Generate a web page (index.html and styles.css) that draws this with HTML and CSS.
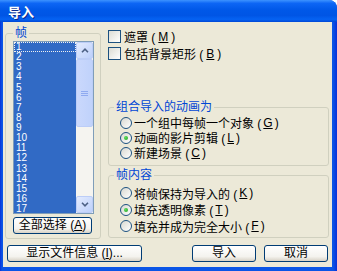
FILE: index.html
```html
<!DOCTYPE html>
<html>
<head>
    <title>导入</title>
    <link rel="stylesheet" href="styles.css">
</head>
<body>
    <div class="window">
        <div class="titlebar"><span class="title">导入</span></div>
        <div class="client">
            <div class="top">
                <!-- frame list -->
                <fieldset class="group frames">
                    <legend>帧</legend>
                    <div class="listbox">
                        <ul class="items">
                            <li class="focus">1</li>
                            <li>2</li>
                            <li>3</li>
                            <li>4</li>
                            <li>5</li>
                            <li>6</li>
                            <li>7</li>
                            <li>8</li>
                            <li>9</li>
                            <li>10</li>
                            <li>11</li>
                            <li>12</li>
                            <li>13</li>
                            <li>14</li>
                            <li>15</li>
                            <li>16</li>
                            <li>17</li>
                        </ul>
                        <div class="scrollbar">
                            <div class="sb-btn">
                                <svg width="8" height="5" viewBox="0 0 8 5"><path d="M1 4.2 L4 1.2 L7 4.2" fill="none" stroke="#4d6185" stroke-width="1.6"/></svg>
                            </div>
                            <div class="sb-thumb">
                                <svg width="7" height="7" viewBox="0 0 7 7"><path d="M0 1.5H7M0 3.5H7M0 5.5H7" stroke="#8faaf0" stroke-width="1"/></svg>
                            </div>
                            <div class="sb-track"></div>
                            <div class="sb-btn">
                                <svg width="8" height="5" viewBox="0 0 8 5"><path d="M1 0.8 L4 3.8 L7 0.8" fill="none" stroke="#4d6185" stroke-width="1.6"/></svg>
                            </div>
                        </div>
                    </div>
                    <button class="btn select-all">全部选择 (<u>A</u>)</button>
                </fieldset>

                <!-- options -->
                <div class="options">
                    <label class="check"><span class="box"></span>遮罩 (<u>M</u>)</label>
                    <label class="check"><span class="box"></span>包括背景矩形 (<u>B</u>)</label>

                    <fieldset class="group anim">
                        <legend>组合导入的动画为</legend>
                        <label class="radio"><span class="dot"></span>一个组中每帧一个对象 (<u>G</u>)</label>
                        <label class="radio"><span class="dot on"></span>动画的影片剪辑 (<u>L</u>)</label>
                        <label class="radio"><span class="dot"></span>新建场景 (<u>C</u>)</label>
                    </fieldset>

                    <fieldset class="group content">
                        <legend>帧内容</legend>
                        <label class="radio"><span class="dot"></span>将帧保持为导入的 (<u>K</u>)</label>
                        <label class="radio"><span class="dot on"></span>填充透明像素 (<u>T</u>)</label>
                        <label class="radio"><span class="dot"></span>填充并成为完全大小 (<u>F</u>)</label>
                    </fieldset>
                </div>
            </div>

            <div class="bottom">
                <button class="btn info">显示文件信息 (<u>I</u>)...</button>
                <button class="btn ok">导入</button>
                <button class="btn cancel">取消</button>
            </div>
        </div>
    </div>
</body>
</html>
```

FILE: styles.css
```css
* {
    box-sizing: border-box;
}

html, body {
    margin: 0;
    padding: 0;
    background-color: #fff;
}

body {
    font-family: "Liberation Sans", "Noto Sans CJK SC", sans-serif;
    font-size: 12px;
    color: #000;
}

u {
    text-decoration: underline;
}

/* Window frame */
.window {
    width: 337px;
    height: 271px;
    display: flex;
    flex-direction: column;
    background: linear-gradient(90deg, #0831d9 0, #0a55e6 2px, #0a55e6 333px, #0831d9 337px);
    border-radius: 0 8px 0 0;
    overflow: hidden;
}

.titlebar {
    height: 22px;
    flex: none;
    display: flex;
    align-items: center;
    padding-left: 8px;
    background: linear-gradient(#3d93ff 0%, #0d66f5 15%, #0058e8 45%, #0055e5 70%, #0562f2 88%, #0047d6 100%);
}

.title {
    color: #fff;
    font-weight: bold;
    font-size: 13px;
    text-shadow: 1px 1px #0a2a8f;
}

.client {
    flex: 1;
    margin: 0 5px 4px 3px;
    background-color: #ece9d8;
    display: flex;
    flex-direction: column;
}

.top {
    display: flex;
    gap: 7px;
    padding: 4px 0 0 2px;
}

/* Group boxes */
.group {
    margin: 0;
    border: 1px solid #d0d0bf;
    border-radius: 3px;
    min-width: 0;
}

legend {
    padding: 0 2px;
    color: #0046d5;
    line-height: 14px;
}

.frames {
    width: 96px;
    height: 213px;
    padding: 1px 5px 4px 7px;
}

.listbox {
    width: 81px;
    height: 173px;
    display: flex;
    border: 1px solid #7f9db9;
    background-color: #fff;
}

.items {
    flex: 1;
    list-style: none;
    margin: 0;
    padding: 0;
    overflow: hidden;
    background-color: #316ac5;
}

.items li {
    color: #fff;
    font-family: "Liberation Sans", sans-serif;
    font-size: 10px;
    line-height: 10.125px;
    height: 10.125px;
    padding-left: 2px;
}

.items li.focus {
    outline: 1px dotted #f0f0f0;
    outline-offset: -1px;
}

.scrollbar {
    width: 17px;
    display: flex;
    flex-direction: column;
    background-color: #f5f4f0;
}

.sb-btn, .sb-thumb {
    display: flex;
    align-items: center;
    justify-content: center;
    border: 1px solid #bccdf7;
    border-radius: 2px;
    background: linear-gradient(135deg, #e3ebfe, #bdd0fb);
}

.sb-btn {
    height: 17px;
}

.sb-thumb {
    height: 68px;
    background: linear-gradient(90deg, #cad8fc, #c0d2fb);
}

.sb-track {
    flex: 1;
}

/* Buttons */
.btn {
    height: 17px;
    padding: 0;
    font-family: "Liberation Sans", "Noto Sans CJK SC", sans-serif;
    font-size: 12px;
    line-height: 15px;
    color: #000;
    border: 1px solid #003c74;
    border-radius: 3px;
    background: linear-gradient(#ffffff, #f4f3ee 70%, #d8d2c6);
}

.select-all {
    width: 79px;
    margin-top: 3px;
}

/* Right column */
.options {
    width: 221px;
    display: flex;
    flex-direction: column;
    padding-top: 2px;
}

.check {
    height: 17px;
    display: flex;
    align-items: center;
    gap: 3px;
}

.box {
    width: 13px;
    height: 13px;
    border: 1px solid #1c5180;
    background: linear-gradient(135deg, #dcdcd4, #ffffff);
}

.anim {
    height: 66px;
    margin-top: 38px;
    padding: 1px 5px 5px;
}

.content {
    height: 70px;
    margin-top: 2px;
    padding: 3px 5px 2px;
}

.radio {
    display: flex;
    align-items: center;
    gap: 2px;
    height: 15px;
    padding-left: 6px;
}

.content .radio {
    height: 16.5px;
}

.dot {
    width: 12px;
    height: 12px;
    border: 1px solid #1c5180;
    border-radius: 50%;
    background: linear-gradient(135deg, #d8d8d0, #ffffff);
    display: flex;
    align-items: center;
    justify-content: center;
}

.dot.on::after {
    content: "";
    width: 4px;
    height: 4px;
    border-radius: 50%;
    background: radial-gradient(circle at 35% 35%, #5ede5e, #21a121);
}

/* Bottom buttons */
.bottom {
    display: flex;
    gap: 8px;
    margin-top: 6px;
    padding-left: 4px;
}

.info {
    width: 135px;
    margin-right: 42px;
}

.ok, .cancel {
    width: 64px;
}
```
